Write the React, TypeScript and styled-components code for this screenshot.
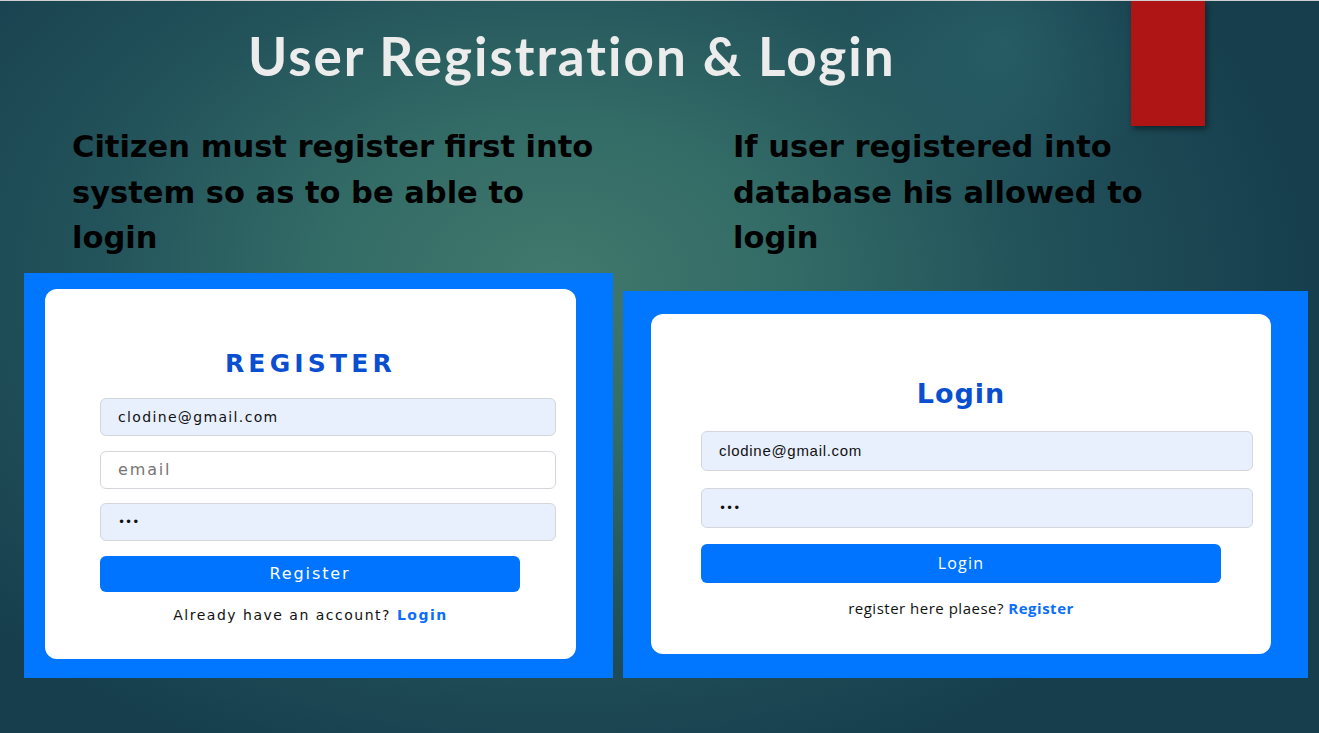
import React from "react";
import styled, { createGlobalStyle } from "styled-components";

const Global = createGlobalStyle`
  html, body { margin: 0; padding: 0; background: #17404f; }
  * { box-sizing: border-box; }
`;

const Slide = styled.main`
  position: relative;
  width: 1319px;
  height: 733px;
  overflow: hidden;
  border-top: 1px solid #cfcfcf;
  display: flex;
  flex-direction: column;
  background:
    radial-gradient(circle at 76% 6%, rgba(45, 105, 112, 0.55) 0, rgba(45, 105, 112, 0) 13%),
    radial-gradient(ellipse 58% 72% at 42% 38%, #41796d 0%, #326a66 32%, #22525a 62%, #163e4d 100%);
`;

const Accent = styled.div`
  position: absolute;
  top: 0;
  left: 1131px;
  width: 74px;
  height: 125px;
  background: #b01515;
  box-shadow: 2px 3px 6px rgba(0, 0, 0, 0.45);
`;

const Title = styled.h1`
  margin: 28px 0 0 248px;
  font-family: Lato, "Liberation Sans", sans-serif;
  font-weight: 700;
  font-size: 53px;
  line-height: 53px;
  letter-spacing: 2px;
  color: #ececec;
  white-space: nowrap;
`;

const Columns = styled.section`
  display: grid;
  grid-template-columns: 589px 685px;
  column-gap: 10px;
  padding-left: 24px;
  margin-top: 42px;
`;

const Column = styled.div`
  display: flex;
  flex-direction: column;
`;

const Statement = styled.p<{ $indent: number }>`
  margin: 0;
  padding-left: ${(p) => p.$indent}px;
  font-family: "DejaVu Sans", Verdana, sans-serif;
  font-weight: 700;
  font-size: 30.5px;
  line-height: 45.5px;
  letter-spacing: 0;
  color: #000;
  white-space: nowrap;
`;

const Panel = styled.div<{ $w: number; $h: number; $pad: string; $offset: number }>`
  width: ${(p) => p.$w}px;
  height: ${(p) => p.$h}px;
  margin-top: ${(p) => p.$offset}px;
  padding: ${(p) => p.$pad};
  background: #0077fe;
  display: flex;
`;

const Card = styled.form<{ $padTop: number; $padLeft: number }>`
  flex: 1;
  background: #fff;
  border-radius: 12px;
  padding: ${(p) => p.$padTop}px 0 0 ${(p) => p.$padLeft}px;
  display: flex;
  flex-direction: column;
  align-items: flex-start;
`;

const Heading = styled.h2<{ $size: number; $line: number; $track: number; $shift: number }>`
  margin: 0;
  align-self: stretch;
  text-align: center;
  margin-left: ${(p) => -p.$shift}px;
  font-family: "DejaVu Sans", Verdana, sans-serif;
  font-weight: 700;
  font-size: ${(p) => p.$size}px;
  line-height: ${(p) => p.$line}px;
  letter-spacing: ${(p) => p.$track}px;
  color: #0a4fd0;
`;

const Field = styled.input<{
  $w: number;
  $h: number;
  $mt: number;
  $filled?: boolean;
  $font: string;
  $size: number;
  $track: number;
}>`
  width: ${(p) => p.$w}px;
  height: ${(p) => p.$h}px;
  margin-top: ${(p) => p.$mt}px;
  padding: 0 0 0 17px;
  border: 1.5px solid #d3d6db;
  border-radius: 6px;
  background: ${(p) => (p.$filled ? "#e8f0fe" : "#ffffff")};
  font-family: ${(p) => p.$font};
  font-size: ${(p) => p.$size}px;
  letter-spacing: ${(p) => p.$track}px;
  color: #111;
  outline: none;
  &::placeholder {
    color: #767676;
    font-size: ${(p) => p.$size + 2}px;
    letter-spacing: ${(p) => p.$track + 0.5}px;
  }
`;

const Submit = styled.button<{ $w: number; $h: number; $mt: number; $font: string; $size: number; $track: number }>`
  width: ${(p) => p.$w}px;
  height: ${(p) => p.$h}px;
  margin-top: ${(p) => p.$mt}px;
  border: none;
  border-radius: 6px;
  background: #0074ff;
  color: #fff;
  font-family: ${(p) => p.$font};
  font-size: ${(p) => p.$size}px;
  letter-spacing: ${(p) => p.$track}px;
  padding: 0;
`;

const Footer = styled.p<{ $mt: number; $font: string; $size: number; $track: number; $shift: number }>`
  margin: ${(p) => p.$mt}px 0 0 ${(p) => -p.$shift}px;
  align-self: stretch;
  text-align: center;
  font-family: ${(p) => p.$font};
  font-size: ${(p) => p.$size}px;
  line-height: 18px;
  letter-spacing: ${(p) => p.$track}px;
  color: #111;
`;

const Link = styled.a`
  color: #0d6efd;
  font-weight: 700;
  text-decoration: none;
`;

const LEFT_FONT = `"DejaVu Sans", Verdana, sans-serif`;
const RIGHT_FONT = `"Liberation Sans", Arial, sans-serif`;
const RIGHT_UI = `"Open Sans", "Liberation Sans", sans-serif`;

export default function App() {
  return (
    <>
      <Global />
      <Slide>
        <Accent />
        <Title>User Registration &amp; Login</Title>
        <Columns>
          <Column>
            <Statement $indent={48}>
              Citizen must register first into
              <br />
              system so as to be able to
              <br />
              login
            </Statement>
            <Panel $w={589} $h={405} $pad="16px 37px 19px 21px" $offset={12}>
              <Card $padTop={60} $padLeft={55} onSubmit={(e) => e.preventDefault()}>
                <Heading $size={25} $line={30} $track={4.2} $shift={55}>
                  REGISTER
                </Heading>
                <Field
                  readOnly
                  $filled
                  $w={456}
                  $h={38}
                  $mt={19}
                  $font={LEFT_FONT}
                  $size={14}
                  $track={1.35}
                  value="clodine@gmail.com"
                />
                <Field
                  readOnly
                  $w={456}
                  $h={38}
                  $mt={15}
                  $font={LEFT_FONT}
                  $size={14}
                  $track={1.35}
                  placeholder="email"
                />
                <Field
                  readOnly
                  $filled
                  type="password"
                  $w={456}
                  $h={38}
                  $mt={14}
                  $font={LEFT_FONT}
                  $size={12}
                  $track={0}
                  value="abc"
                />
                <Submit type="submit" $w={420} $h={36} $mt={15} $font={LEFT_FONT} $size={16} $track={1.9}>
                  Register
                </Submit>
                <Footer $mt={14} $font={LEFT_FONT} $size={14} $track={1.5} $shift={55}>
                  Already have an account? <Link href="#login">Login</Link>
                </Footer>
              </Card>
            </Panel>
          </Column>
          <Column>
            <Statement $indent={110}>
              If user registered into
              <br />
              database his allowed to
              <br />
              login
            </Statement>
            <Panel $w={685} $h={387} $pad="23px 37px 24px 28px" $offset={30}>
              <Card $padTop={64} $padLeft={50} onSubmit={(e) => e.preventDefault()}>
                <Heading $size={27} $line={32} $track={1} $shift={50}>
                  Login
                </Heading>
                <Field
                  readOnly
                  $filled
                  $w={552}
                  $h={40}
                  $mt={21}
                  $font={RIGHT_FONT}
                  $size={15}
                  $track={0.7}
                  value="clodine@gmail.com"
                />
                <Field
                  readOnly
                  $filled
                  type="password"
                  $w={552}
                  $h={40}
                  $mt={17}
                  $font={LEFT_FONT}
                  $size={12}
                  $track={0}
                  value="abc"
                />
                <Submit type="submit" $w={520} $h={39} $mt={16} $font={RIGHT_UI} $size={16} $track={1.2}>
                  Login
                </Submit>
                <Footer $mt={16} $font={RIGHT_UI} $size={15} $track={0.5} $shift={50}>
                  register here plaese? <Link href="#register">Register</Link>
                </Footer>
              </Card>
            </Panel>
          </Column>
        </Columns>
      </Slide>
    </>
  );
}
